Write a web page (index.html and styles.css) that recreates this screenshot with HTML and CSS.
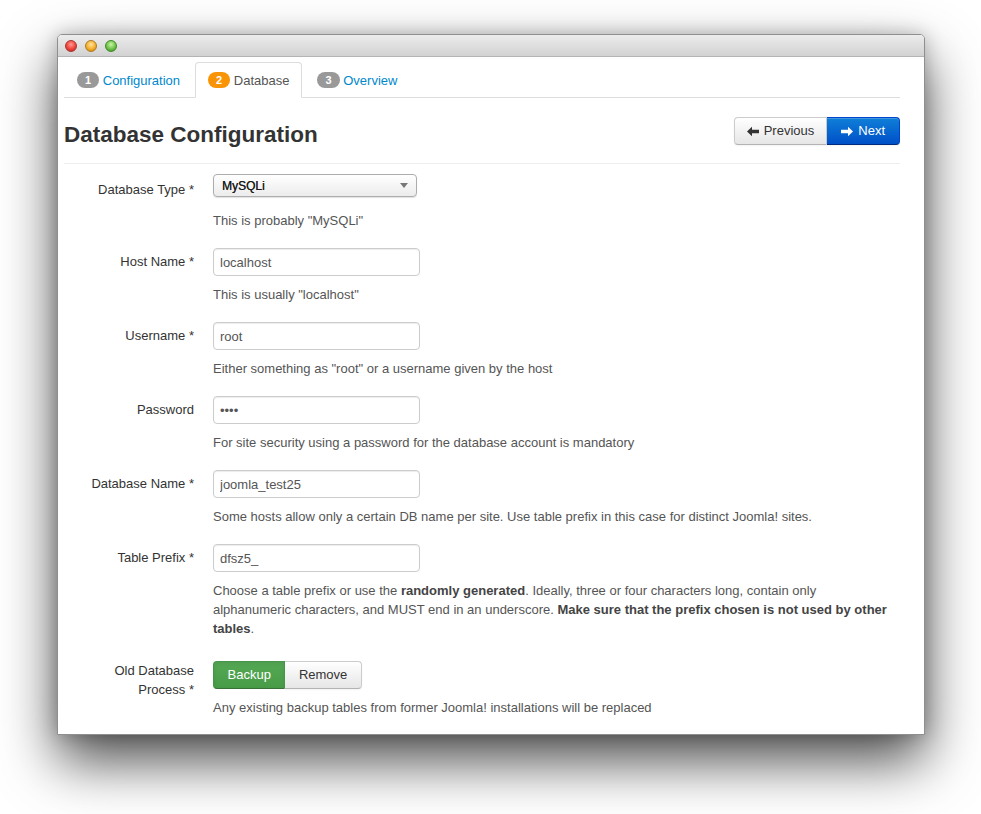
FILE: index.html
```html
<!DOCTYPE html>
<html lang="en">
<head>
<meta charset="utf-8">
<title>Joomla! Installation - Database</title>
<link rel="stylesheet" href="styles.css">
</head>
<body>
<div class="window">
  <div class="titlebar">
    <span class="light light-red"></span>
    <span class="light light-yellow"></span>
    <span class="light light-green"></span>
  </div>
  <div class="page">
    <ul class="tabs">
      <li class="tab"><a href="#"><span class="badge">1</span> Configuration</a></li>
      <li class="tab active"><a href="#"><span class="badge badge-warning">2</span> Database</a></li>
      <li class="tab"><a href="#"><span class="badge">3</span> Overview</a></li>
    </ul>

    <div class="header">
      <h3 class="title">Database Configuration</h3>
      <div class="btn-group">
        <a class="btn" href="#"><svg class="icon" width="13" height="11" viewBox="0 0 13 11"><path d="M0 5.5 L5 0.8 L5 3.7 L12 3.7 L12 7.3 L5 7.3 L5 10.2 Z" fill="#333"/></svg> Previous</a>
        <a class="btn btn-primary" href="#"><svg class="icon" width="13" height="11" viewBox="0 0 13 11"><path d="M12 5.5 L7 0.8 L7 3.7 L0 3.7 L0 7.3 L7 7.3 L7 10.2 Z" fill="#fff"/></svg> Next</a>
      </div>
    </div>

    <form class="form">
      <div class="row">
        <label class="label label-first">Database Type *</label>
        <div class="controls">
          <div class="control-box">
            <div class="select"><span>MySQLi</span><svg width="8" height="5" viewBox="0 0 8 5"><path d="M0 0 L8 0 L4 5 Z" fill="#777"/></svg></div>
          </div>
          <p class="help">This is probably "MySQLi"</p>
        </div>
      </div>

      <div class="row">
        <label class="label">Host Name *</label>
        <div class="controls">
          <input class="input" type="text" value="localhost">
          <p class="help">This is usually "localhost"</p>
        </div>
      </div>

      <div class="row">
        <label class="label">Username *</label>
        <div class="controls">
          <input class="input" type="text" value="root">
          <p class="help">Either something as "root" or a username given by the host</p>
        </div>
      </div>

      <div class="row">
        <label class="label">Password</label>
        <div class="controls">
          <input class="input" type="password" value="abcd">
          <p class="help">For site security using a password for the database account is mandatory</p>
        </div>
      </div>

      <div class="row">
        <label class="label">Database Name *</label>
        <div class="controls">
          <input class="input" type="text" value="joomla_test25">
          <p class="help">Some hosts allow only a certain DB name per site. Use table prefix in this case for distinct Joomla! sites.</p>
        </div>
      </div>

      <div class="row row-wide">
        <label class="label">Table Prefix *</label>
        <div class="controls">
          <input class="input" type="text" value="dfsz5_">
          <p class="help">Choose a table prefix or use the <strong>randomly generated</strong>. Ideally, three or four characters long, contain only<br>alphanumeric characters, and MUST end in an underscore. <strong>Make sure that the prefix chosen is not used by other<br>tables</strong>.</p>
        </div>
      </div>

      <div class="row">
        <label class="label label-tight">Old Database Process *</label>
        <div class="controls">
          <div class="toggle">
            <a class="btn btn-success" href="#">Backup</a><a class="btn" href="#">Remove</a>
          </div>
          <p class="help">Any existing backup tables from former Joomla! installations will be replaced</p>
        </div>
      </div>
    </form>
  </div>
</div>
</body>
</html>
```

FILE: styles.css
```css
html, body {
  margin: 0;
  padding: 0;
  background: #ffffff;
}

body {
  box-sizing: border-box;
  min-height: 814px;
  padding: 34px 0 0 57px;
  font-family: "Liberation Sans", Arial, Helvetica, sans-serif;
  font-size: 13px;
  line-height: 18px;
  color: #333333;
}

.window {
  box-sizing: border-box;
  width: 868px;
  height: 701px;
  border: 1px solid #8f8f8f;
  border-radius: 5px 5px 0 0;
  background: #ffffff;
  overflow: hidden;
  box-shadow: 0 26px 55px rgba(0, 0, 0, 0.7), 0 0 18px rgba(0, 0, 0, 0.22);
}

.titlebar {
  box-sizing: border-box;
  height: 22px;
  display: flex;
  align-items: center;
  gap: 8px;
  padding-left: 7px;
  background: linear-gradient(#ececec, #d2d2d2);
  border-bottom: 1px solid #b4b4b4;
}

.light {
  width: 12px;
  height: 12px;
  border-radius: 50%;
  box-sizing: border-box;
}

.light-red {
  background: radial-gradient(circle at 50% 35%, #ff9b93 0%, #f0433c 55%, #b8201a 100%);
  border: 1px solid #a8342e;
}

.light-yellow {
  background: radial-gradient(circle at 50% 35%, #ffe3a0 0%, #f4b02c 55%, #c07a0b 100%);
  border: 1px solid #b07a24;
}

.light-green {
  background: radial-gradient(circle at 50% 35%, #c9f5a6 0%, #6fc34a 55%, #38871b 100%);
  border: 1px solid #3f8a28;
}

.page {
  padding: 5px 24px 0 6px;
}

/* Tabs */
.tabs {
  list-style: none;
  margin: 0;
  padding: 0;
  display: flex;
  border-bottom: 1px solid #dddddd;
}

.tab {
  margin-right: 2px;
  margin-bottom: -1px;
}

.tab a {
  display: block;
  padding: 9px 12px 7px;
  line-height: 18px;
  border: 1px solid transparent;
  border-radius: 4px 4px 0 0;
  color: #0088cc;
  text-decoration: none;
}

.tab.active a {
  color: #555555;
  background: #ffffff;
  border-color: #dddddd #dddddd transparent;
}

.badge {
  display: inline-block;
  min-width: 6px;
  padding: 1px 8px;
  font-size: 11px;
  font-weight: bold;
  line-height: 14px;
  color: #ffffff;
  text-align: center;
  background: #999999;
  border-radius: 9px;
  vertical-align: 1px;
}

.badge-warning {
  background: #f89406;
}

/* Header */
.header {
  display: flex;
  justify-content: space-between;
  align-items: flex-start;
  padding: 19px 0 14px;
  border-bottom: 1px solid #eeeeee;
}

.title {
  margin: 4px 0 0;
  font-size: 22.5px;
  font-weight: bold;
  line-height: 28px;
  color: #333333;
}

.btn-group {
  display: flex;
}

.btn {
  box-sizing: border-box;
  display: inline-flex;
  align-items: center;
  height: 28px;
  padding: 4px 12px;
  font-size: 13px;
  line-height: 18px;
  color: #333333;
  text-decoration: none;
  background: linear-gradient(#ffffff, #e6e6e6);
  border: 1px solid #cccccc;
  border-bottom-color: #b3b3b3;
  box-shadow: inset 0 1px 0 rgba(255, 255, 255, 0.2), 0 1px 2px rgba(0, 0, 0, 0.05);
}

.btn-group .btn:first-child,
.toggle .btn:first-child {
  border-radius: 4px 0 0 4px;
}

.btn-group .btn:last-child,
.toggle .btn:last-child {
  border-radius: 0 4px 4px 0;
  border-left: 0;
}

.icon {
  margin-right: 4px;
}

.btn-primary {
  padding: 4px 14px;
  color: #ffffff;
  background: linear-gradient(#0f7fd8, #0050c8);
  border-color: #0044cc #0044cc #002a80;
}

.toggle .btn {
  padding: 4px 13.5px;
}

.toggle .btn-success {
  color: #ffffff;
  background: linear-gradient(#55a955, #489c48);
  border-color: #45964a #45964a #387038;
  box-shadow: inset 0 2px 4px rgba(0, 0, 0, 0.08);
}

/* Form */
.form {
  margin: 10px 0 0;
}

.row {
  display: grid;
  grid-template-columns: 130px 1fr;
  column-gap: 19px;
  margin-bottom: 18px;
}

.row-wide {
  margin-bottom: 23px;
}

.label {
  text-align: right;
  padding-top: 5px;
  line-height: 18px;
  color: #333333;
}

.label-first {
  padding-top: 7px;
}

.label-tight {
  padding-top: 0;
  line-height: 19px;
}

.controls {
  min-width: 0;
}

.control-box {
  height: 28px;
}

.select {
  box-sizing: border-box;
  width: 204px;
  height: 23px;
  display: flex;
  align-items: center;
  justify-content: space-between;
  padding: 0 8px 0 8px;
  font-size: 12px;
  color: #1a1a1a;
  text-shadow: 0.25px 0 0 #333333;
  background: linear-gradient(#ffffff, #ececec);
  border: 1px solid #adadad;
  border-radius: 4px;
  box-shadow: 0 1px 1px rgba(0, 0, 0, 0.12);
}

.input {
  box-sizing: border-box;
  display: block;
  width: 207px;
  height: 28px;
  margin: 0;
  padding: 4px 6px;
  font-family: "Liberation Sans", Arial, Helvetica, sans-serif;
  font-size: 13px;
  line-height: 18px;
  color: #555555;
  background: #ffffff;
  border: 1px solid #cccccc;
  border-radius: 4px;
  box-shadow: inset 0 1px 1px rgba(0, 0, 0, 0.075);
  outline: none;
}

.toggle {
  display: flex;
}

.help {
  margin: 9px 0 0;
  line-height: 19px;
  color: #555555;
}

.help strong {
  color: #444444;
}
```
